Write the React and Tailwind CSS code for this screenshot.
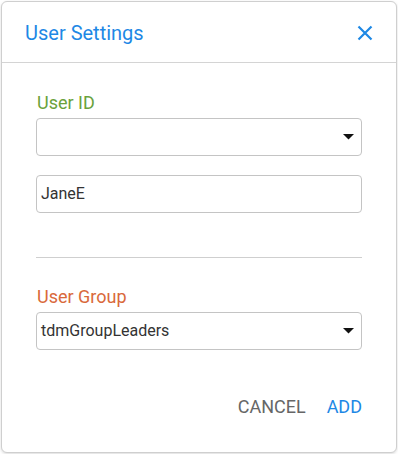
export default function App() {
  const font = { fontFamily: "Roboto, 'Liberation Sans', sans-serif" };
  const Caret = () => (
    <svg width="11" height="6" viewBox="0 0 11 6" className="shrink-0">
      <path d="M0 0 L11 0 L5.5 5.5 Z" fill="#111" />
    </svg>
  );
  return (
    <div className="w-[398px] h-[454px] bg-white pt-[1px] pl-[1px]" style={font}>
      <div className="w-[396px] h-[452px] bg-white border border-[#cfcfcf] rounded-[6px] shadow-[0_1px_3px_rgba(0,0,0,0.15)] flex flex-col">
        <div className="h-[61px] flex items-center justify-between pl-[23px] pr-[23px] border-b border-[#d4d4d4]">
          <span className="text-[20px] leading-[24px] text-[#1e88e5] pt-[2px]">User Settings</span>
          <svg width="16" height="16" viewBox="0 0 16 16" className="mt-[2px]">
            <path d="M1.5 1.5 L14.5 14.5 M14.5 1.5 L1.5 14.5" stroke="#1e88e5" strokeWidth="2.2" strokeLinecap="butt" />
          </svg>
        </div>
        <div className="flex flex-col px-[34px] pt-[29px]">
          <div className="text-[18px] leading-[22px] text-[#6aa23c] pl-[1px]">User ID</div>
          <div className="mt-[4px] h-[38px] border border-[#c4c4c4] rounded-[4px] flex items-center justify-end pr-[7px]">
            <Caret />
          </div>
          <div className="mt-[19px] h-[38px] border border-[#c4c4c4] rounded-[4px] flex items-center pl-[4px] text-[16px] text-[#333]">
            JaneE
          </div>
          <div className="mt-[44px] h-px bg-[#cfcfcf]" />
          <div className="mt-[28px] text-[18px] leading-[22px] text-[#d9693b] pl-[1px]">User Group</div>
          <div className="mt-[4px] h-[38px] border border-[#c4c4c4] rounded-[4px] flex items-center justify-between pl-[4px] pr-[7px] text-[16px] text-[#333]">
            <span>tdmGroupLeaders</span>
            <Caret />
          </div>
          <div className="mt-[38px] h-[36px] flex items-center justify-end gap-[21px] text-[18px]">
            <span className="text-[#666]">CANCEL</span>
            <span className="text-[#1e88e5]">ADD</span>
          </div>
        </div>
      </div>
    </div>
  );
}
